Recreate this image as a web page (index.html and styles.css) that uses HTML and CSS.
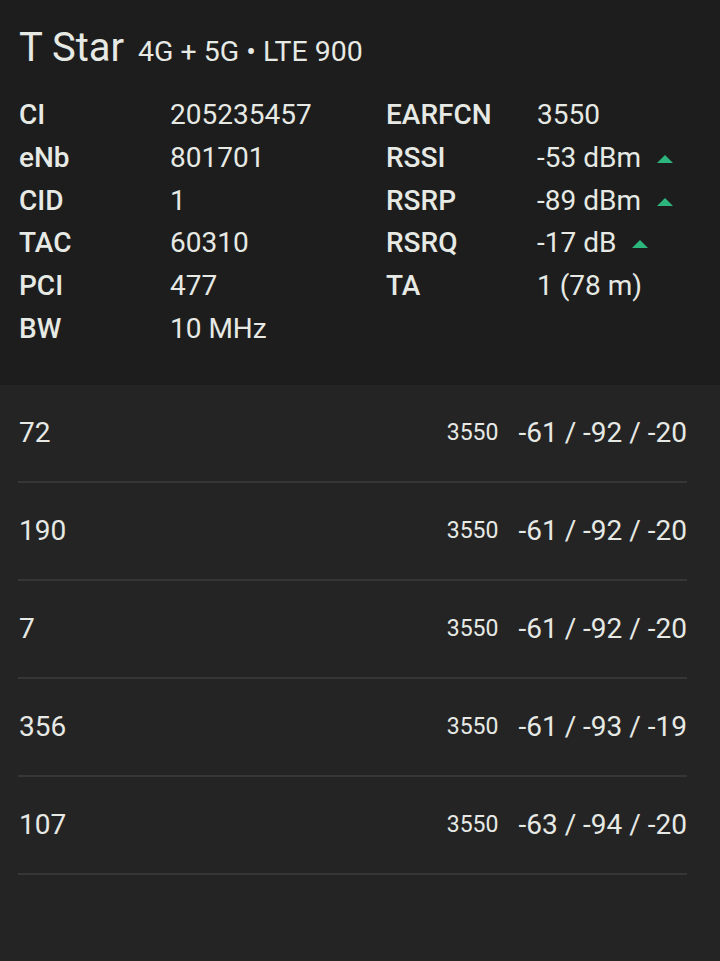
FILE: index.html
```html
<!DOCTYPE html>
<html lang="en">
<head>
    <meta charset="UTF-8">
    <meta name="viewport" content="width=device-width, initial-scale=1.0">
    <title>T Star</title>
    <link rel="stylesheet" href="styles.css">
</head>
<body>
    <div class="serving">
        <h1 class="title">T Star <span class="subtitle">4G + 5G • LTE 900</span></h1>
        <div class="info-grid">
            <div class="label">CI</div>
            <div class="value">205235457</div>
            <div class="label">EARFCN</div>
            <div class="value">3550</div>

            <div class="label">eNb</div>
            <div class="value">801701</div>
            <div class="label">RSSI</div>
            <div class="value">-53 dBm <svg class="trend" viewBox="0 0 16 8"><polygon points="8,0 16,8 0,8"/></svg></div>

            <div class="label">CID</div>
            <div class="value">1</div>
            <div class="label">RSRP</div>
            <div class="value">-89 dBm <svg class="trend" viewBox="0 0 16 8"><polygon points="8,0 16,8 0,8"/></svg></div>

            <div class="label">TAC</div>
            <div class="value">60310</div>
            <div class="label">RSRQ</div>
            <div class="value">-17 dB <svg class="trend" viewBox="0 0 16 8"><polygon points="8,0 16,8 0,8"/></svg></div>

            <div class="label">PCI</div>
            <div class="value">477</div>
            <div class="label">TA</div>
            <div class="value">1 (78 m)</div>

            <div class="label">BW</div>
            <div class="value">10 MHz</div>
        </div>
    </div>

    <div class="neighbours">
        <div class="cell-row">
            <span class="pci">72</span>
            <span class="earfcn">3550</span>
            <span class="signal">-61 / -92 / -20</span>
        </div>
        <div class="cell-row">
            <span class="pci">190</span>
            <span class="earfcn">3550</span>
            <span class="signal">-61 / -92 / -20</span>
        </div>
        <div class="cell-row">
            <span class="pci">7</span>
            <span class="earfcn">3550</span>
            <span class="signal">-61 / -92 / -20</span>
        </div>
        <div class="cell-row">
            <span class="pci">356</span>
            <span class="earfcn">3550</span>
            <span class="signal">-61 / -93 / -19</span>
        </div>
        <div class="cell-row">
            <span class="pci">107</span>
            <span class="earfcn">3550</span>
            <span class="signal">-63 / -94 / -20</span>
        </div>
    </div>
</body>
</html>
```

FILE: styles.css
```css
body {
    margin: 0;
    background-color: #242424;
    color: #e6e9e4;
    font-family: Roboto, "Noto Sans", sans-serif;
    min-height: 961px;
}

.serving {
    background-color: #1c1d1c;
    padding: 24px 19px 34px 19px;
}

.title {
    margin: 0 0 22px 0;
    font-size: 40px;
    font-weight: 400;
    line-height: 48px;
}

.subtitle {
    font-size: 28.5px;
    line-height: 1;
    margin-left: 4px;
}

.info-grid {
    display: grid;
    grid-template-columns: 151px 216px 151px auto;
    font-size: 28px;
    line-height: 42.8px;
}

.label {
    font-weight: 500;
}

.trend {
    width: 16px;
    height: 8px;
    margin-left: 9px;
    vertical-align: 4px;
    fill: #2cb67d;
}

.neighbours {
    padding: 0 33px 0 18px;
}

.cell-row {
    display: flex;
    align-items: center;
    height: 96px;
    border-bottom: 2px solid #363636;
    font-size: 28px;
}

.pci {
    flex: 1;
    padding-left: 1px;
}

.earfcn {
    font-size: 23px;
    margin-right: 20px;
}

.signal {
    white-space: nowrap;
}
```
